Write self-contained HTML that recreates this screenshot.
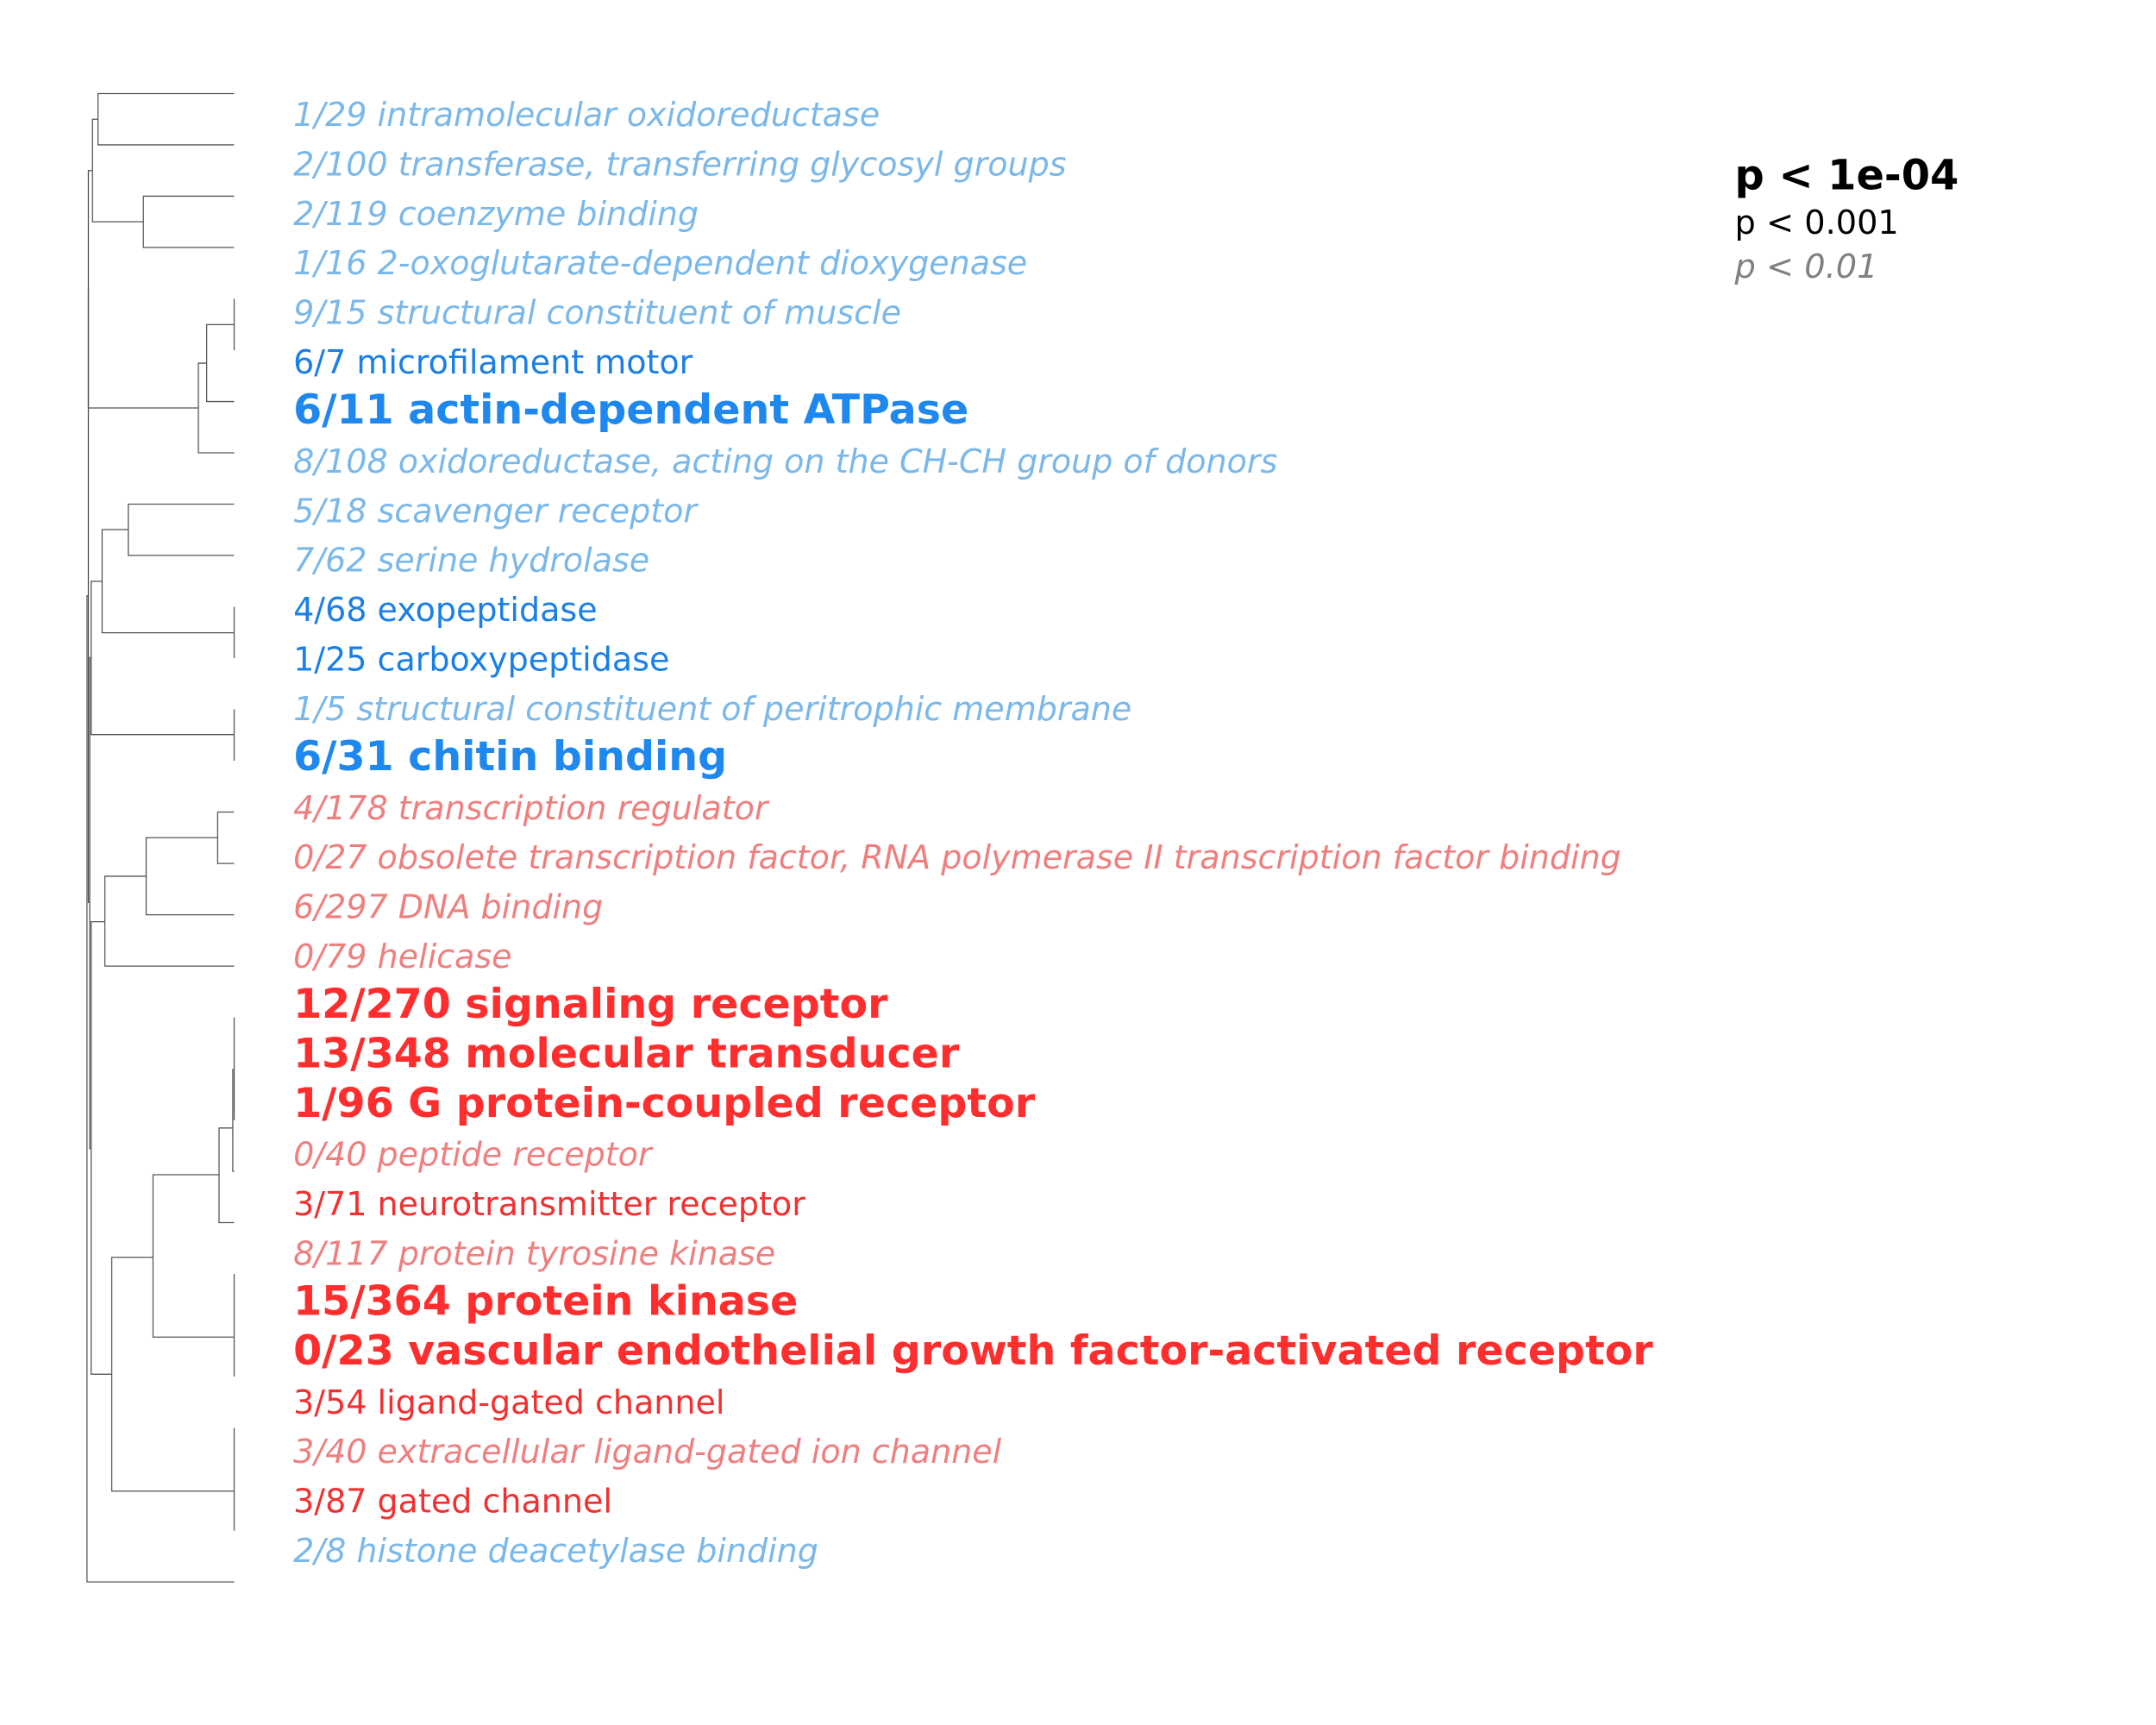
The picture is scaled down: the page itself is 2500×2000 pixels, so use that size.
<!DOCTYPE html>
<html><head><meta charset="utf-8"><style>html,body{margin:0;padding:0;background:#fff}svg{display:block}</style></head>
<body>
<svg width="2500" height="2000" viewBox="0 0 1567 1254" xmlns="http://www.w3.org/2000/svg" font-family="'DejaVu Sans','Liberation Sans',sans-serif">
<rect width="1567" height="1254" fill="#fff"/>
<g stroke="#555" stroke-width="0.8" fill="none">
<path d="M170 68H71V105.3H170"/>
<path d="M170 142.6H104V179.9H170"/>
<path d="M71 86.7H67V161.2H104"/>
<path d="M170 217.2V254.6"/>
<path d="M170 236H150V291.9H170"/>
<path d="M150 264H144V329.2H170"/>
<path d="M67 124H64V296.6H144"/>
<path d="M170 366.5H93V403.8H170"/>
<path d="M170 441.1V478.4"/>
<path d="M93 385H74V460H170"/>
<path d="M74 422.6H66V534H170"/>
<path d="M170 515.7V553"/>
<path d="M170 590.3H158V627.7H170"/>
<path d="M158 609H106V665H170"/>
<path d="M106 637H76V702.3H170"/>
<path d="M170 739.6V814.2M169 777V851.5H170"/>
<path d="M169 820H159V888.8H170"/>
<path d="M170 926.1V1000.7"/>
<path d="M159 854H111V972H170"/>
<path d="M170 1038V1112.7"/>
<path d="M111 914H81V1084H170"/>
<path d="M76 670H66V999H81"/>
<path d="M66 478H65V835H66"/>
<path d="M64 210V656H65"/>
<path d="M64 433H63V1150H170"/>
</g>
<g font-size="23.85">
<text x="213" y="91.5" fill="#7ab8ea" font-style="italic">1/29 intramolecular oxidoreductase</text>
<text x="213" y="127.5" fill="#7ab8ea" font-style="italic">2/100 transferase, transferring glycosyl groups</text>
<text x="213" y="163.5" fill="#7ab8ea" font-style="italic">2/119 coenzyme binding</text>
<text x="213" y="199.5" fill="#7ab8ea" font-style="italic">1/16 2-oxoglutarate-dependent dioxygenase</text>
<text x="213" y="235.5" fill="#7ab8ea" font-style="italic">9/15 structural constituent of muscle</text>
<text x="213" y="271.5" fill="#1a7fe6">6/7 microfilament motor</text>
<text x="213" y="308" fill="#1e88ee" font-weight="bold" font-size="29.8">6/11 actin-dependent ATPase</text>
<text x="213" y="343.5" fill="#7ab8ea" font-style="italic">8/108 oxidoreductase, acting on the CH-CH group of donors</text>
<text x="213" y="379.5" fill="#7ab8ea" font-style="italic">5/18 scavenger receptor</text>
<text x="213" y="415.5" fill="#7ab8ea" font-style="italic">7/62 serine hydrolase</text>
<text x="213" y="451.5" fill="#1a7fe6">4/68 exopeptidase</text>
<text x="213" y="487.5" fill="#1a7fe6">1/25 carboxypeptidase</text>
<text x="213" y="523.5" fill="#7ab8ea" font-style="italic">1/5 structural constituent of peritrophic membrane</text>
<text x="213" y="560" fill="#1e88ee" font-weight="bold" font-size="29.8">6/31 chitin binding</text>
<text x="213" y="595.5" fill="#ef7f7f" font-style="italic">4/178 transcription regulator</text>
<text x="213" y="631.5" fill="#ef7f7f" font-style="italic">0/27 obsolete transcription factor, RNA polymerase II transcription factor binding</text>
<text x="213" y="667.5" fill="#ef7f7f" font-style="italic">6/297 DNA binding</text>
<text x="213" y="703.5" fill="#ef7f7f" font-style="italic">0/79 helicase</text>
<text x="213" y="740" fill="#ff2e2e" font-weight="bold" font-size="29.8">12/270 signaling receptor</text>
<text x="213" y="776" fill="#ff2e2e" font-weight="bold" font-size="29.8">13/348 molecular transducer</text>
<text x="213" y="812" fill="#ff2e2e" font-weight="bold" font-size="29.8">1/96 G protein-coupled receptor</text>
<text x="213" y="847.5" fill="#ef7f7f" font-style="italic">0/40 peptide receptor</text>
<text x="213" y="883.5" fill="#f23030">3/71 neurotransmitter receptor</text>
<text x="213" y="919.5" fill="#ef7f7f" font-style="italic">8/117 protein tyrosine kinase</text>
<text x="213" y="956" fill="#ff2e2e" font-weight="bold" font-size="29.8">15/364 protein kinase</text>
<text x="213" y="992" fill="#ff2e2e" font-weight="bold" font-size="29.8">0/23 vascular endothelial growth factor-activated receptor</text>
<text x="213" y="1027.5" fill="#f23030">3/54 ligand-gated channel</text>
<text x="213" y="1063.5" fill="#ef7f7f" font-style="italic">3/40 extracellular ligand-gated ion channel</text>
<text x="213" y="1099.5" fill="#f23030">3/87 gated channel</text>
<text x="213" y="1135.5" fill="#7ab8ea" font-style="italic">2/8 histone deacetylase binding</text>
</g>
<text x="1261" y="137.5" font-size="30" font-weight="bold" fill="#000">p &lt; 1e-04</text>
<text x="1261" y="170" font-size="24" fill="#000">p &lt; 0.001</text>
<text x="1261" y="202" font-size="24" font-style="italic" fill="#808080">p &lt; 0.01</text>
</svg>
</body></html>
